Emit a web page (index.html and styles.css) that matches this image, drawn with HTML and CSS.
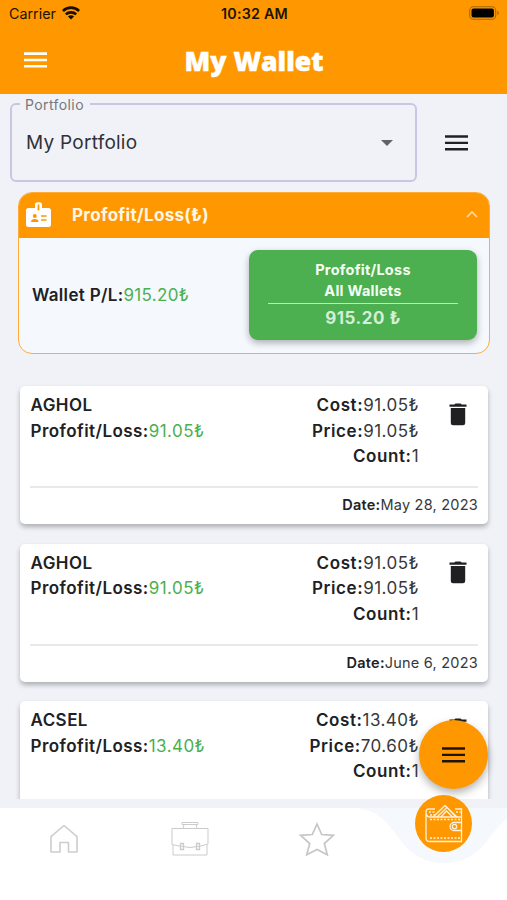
FILE: index.html
```html
<!DOCTYPE html>
<html lang="en">
<head>
<meta charset="utf-8">
<title>My Wallet</title>
<link rel="stylesheet" href="styles.css">
</head>
<body>
<div class="app">
  <header class="top">
    <div class="status">
      <div class="carrier"><span class="carrier-name">Carrier</span>
        <svg width="18" height="14" viewBox="0 0 18 14"><g fill="none" stroke="#171000" stroke-width="2.7"><path d="M.9 5a11.6 11.6 0 0 1 16.2 0"/><path d="M3.8 8.4a7.5 7.5 0 0 1 10.4 0"/></g><path d="M9 13.6 5.9 10.600a4.4 4.4 0 0 1 6.2 0z" fill="#171000"/></svg>
      </div>
      <div class="clock">10:32 AM</div>
      <svg class="battery" width="31" height="14" viewBox="0 0 31 14"><rect x=".7" y=".7" width="26" height="12.6" rx="3.8" fill="none" stroke="#a86500" stroke-width="1.1"/><rect x="2.5" y="2.5" width="22.4" height="9" rx="2" fill="#000"/><path d="M28.3 4.8v4.4q1.5-.7 1.5-2.2t-1.5-2.2z" fill="#a86500"/></svg>
    </div>
    <div class="bar">
      <svg class="menu" width="23" height="16" viewBox="0 0 23 16"><path d="M0 1.6h23M0 8h23M0 14.3h23" stroke="#fff" stroke-width="2.6"/></svg>
      <h1>My Wallet</h1>
    </div>
  </header>
  <main>
    <div class="picker">
      <fieldset><legend>Portfolio</legend>
        <div class="select"><span>My Portfolio</span><svg width="12" height="6" viewBox="0 0 12 6"><path d="M0 0h12L6 6z" fill="#626368"/></svg></div>
      </fieldset>
      <svg class="options" width="23" height="16" viewBox="0 0 23 16"><path d="M0 1.5h23M0 7.9h23M0 14.3h23" stroke="#202124" stroke-width="2.4"/></svg>
    </div>
    <section class="summary">
      <div class="summary-head">
        <svg class="badge" width="25" height="26" viewBox="0 0 25 26"><path fill="#fff" d="M2.5 6h20A2.500 2.500 0 0 1 25 8.500v14a2.500 2.500 0 0 1-2.500 2.500h-20A2.500 2.500 0 0 1 0 22.500v-14A2.500 2.500 0 0 1 2.500 6z"/><rect x="9" y=".3" width="7" height="9.700" rx="2.500" fill="#fff"/><path d="M12.500 2.500v6" stroke="#ff9800" stroke-width="1.800"/><g fill="#ff9800"><circle cx="8.800" cy="14" r="2"/><path d="M5 20q0-3 3.800-3t3.800 3zM15 13.300h5.500v1.400H15zM15 17.300h5.500v1.400H15z"/></g></svg>
        <span class="summary-title">Profofit/Loss(₺)</span>
        <svg class="chev" width="12" height="8" viewBox="0 0 12 8"><path d="m1 7 5-5 5 5" fill="none" stroke="#ffd69a" stroke-width="1.700"/></svg>
      </div>
      <div class="summary-body">
        <div class="own"><b>Wallet P/L:</b><span class="gain">915.20₺</span></div>
        <div class="total"><div class="total-name">Profofit/Loss<br>All Wallets</div><div class="total-value">915.20 ₺</div></div>
      </div>
    </section>
    <div class="list">
      <article class="card">
        <div class="info">
          <div class="left"><b>AGHOL</b><br><b>Profofit/Loss:</b><span class="gain">91.05₺</span></div>
          <div class="right"><b>Cost:</b>91.05₺<br><b>Price:</b>91.05₺<br><b>Count:</b>1</div>
          <svg class="trash" width="18" height="23" viewBox="0 0 18 23"><path d="M.5 1.500h4.800L6.500.5h5l1.200 1h4.800v2.200H.5zM1.800 5h14.400v15q0 2.300-2.300 2.300H4.100q-2.300 0-2.300-2.300z" fill="#202022"/></svg>
        </div>
        <div class="date"><b>Date:</b>May 28, 2023</div>
      </article>
      <article class="card">
        <div class="info">
          <div class="left"><b>AGHOL</b><br><b>Profofit/Loss:</b><span class="gain">91.05₺</span></div>
          <div class="right"><b>Cost:</b>91.05₺<br><b>Price:</b>91.05₺<br><b>Count:</b>1</div>
          <svg class="trash" width="18" height="23" viewBox="0 0 18 23"><path d="M.5 1.500h4.800L6.500.5h5l1.200 1h4.800v2.200H.5zM1.800 5h14.400v15q0 2.300-2.300 2.300H4.100q-2.300 0-2.300-2.300z" fill="#202022"/></svg>
        </div>
        <div class="date"><b>Date:</b>June 6, 2023</div>
      </article>
      <article class="card">
        <div class="info">
          <div class="left"><b>ACSEL</b><br><b>Profofit/Loss:</b><span class="gain">13.40₺</span></div>
          <div class="right"><b>Cost:</b>13.40₺<br><b>Price:</b>70.60₺<br><b>Count:</b>1</div>
          <svg class="trash" width="18" height="23" viewBox="0 0 18 23"><path d="M.5 1.500h4.800L6.500.5h5l1.200 1h4.800v2.200H.5zM1.800 5h14.400v15q0 2.300-2.300 2.300H4.100q-2.300 0-2.300-2.300z" fill="#202022"/></svg>
        </div>
      </article>
    </div>
  </main>
  <nav>
    <svg class="notch" width="227" height="56" viewBox="0 0 227 56"><path d="M75 0C98 2 107 14 121 33c11 14 23 22 43 22s32-8 43-22c7-9 12-16 20-22V0z" fill="#f5f9fd"/></svg>
    <svg class="tab" width="30" height="30" viewBox="0 0 30 30"><path d="M15 1.500 28 12.700V28h-8.500V18.500H11V28H2V12.700z" fill="none" stroke="#cdcdcd" stroke-width="1.600" stroke-linejoin="round"/></svg>
    <svg class="tab" width="38" height="36" viewBox="0 0 38 36"><g fill="none" stroke="#cbcbcb"><path d="M1 7.500h36V23l-7 2-11 1.500L8 25l-7-1.500zM2 24v10h34V24"/><path d="M11 1.500h16v2H11zM13 3.500l-1 4M25 3.500l1 4"/><path d="M9.500 22.500h3v6h-3zM25.500 22.500h3v6h-3z" stroke-width="1.300"/></g></svg>
    <svg class="tab" width="36" height="34" viewBox="0 0 36 34"><path d="m18 2 4.700 10.500 11.600.8-9 8.200 3 11.300L18 27.500 7.700 32.800l3-11.300-9-8.200 11.600-.8z" fill="none" stroke="#c6c6c6" stroke-width="1.700"/></svg>
    <span class="tab-space"></span>
  </nav>
  <button class="fab"><svg width="23" height="16" viewBox="0 0 23 16"><path d="M0 1.500h23M0 7.900h23M0 14.300h23" stroke="#1d1300" stroke-width="2.400"/></svg></button>
  <button class="wallet"><svg width="38" height="38" viewBox="0 0 38 38"><g fill="none" stroke="#fff1dc" stroke-width="1.300"><path d="M10 4H3.500q-2.500 0-2.500 3v26q0 3.500 3.500 3.500h32v-11M36.500 17.500V4H30M1 7q0 5 4 5h31.500"/><path d="m8 12 12-11.500L32 12M12 12 22 2.500 31 12M16 12l5.500-6 6 6"/><path d="M36.500 17.500H29a4 4 0 0 0 0 8h7.500z"/><circle cx="29.500" cy="21.500" r="2.200"/><path d="M5 14.500h31M5 33h31M4 7h6M31 7h5M5 10h5" stroke-dasharray="2 1.500" stroke-width="1.600"/></g></svg></button>
</div>
</body>
</html>
```
FILE: styles.css
```css
* { box-sizing: border-box; }
body { margin: 0; background: #f1f2f8; }
.app { position: relative; width: 507px; height: 900px; overflow: hidden; display: flex; flex-direction: column; font-family: Inter, "Noto Sans", sans-serif; color: #202124; }
svg { display: block; flex: none; }
b { font-weight: 600; }
button { border: 0; padding: 0; display: flex; align-items: center; justify-content: center; border-radius: 50%; background: #ff9800; }
.top { height: 94px; flex: none; background: #ff9800; }
.status { height: 26px; display: grid; grid-template-columns: 1fr auto 1fr; align-items: center; padding: 0 7px 0 9px; color: #1d1300; font-size: 14.300px; }
.carrier { display: flex; gap: 6px; align-items: center; }
.carrier-name { letter-spacing: 0; }
.clock { font-weight: 600; letter-spacing: .2px; }
.battery { justify-self: end; }
.bar { height: 68px; display: grid; grid-template-columns: 1fr auto 1fr; align-items: center; padding: 0 23px 0 24px; }
h1 { margin: 2px 0 0; font: 800 26.600px/36px "Open Sans", sans-serif; color: #fff; letter-spacing: 0; -webkit-text-stroke: .5px #fff; }
main { height: 705px; flex: none; overflow: hidden; }
.picker { display: flex; align-items: center; height: 98px; padding-left: 10px; gap: 28px; }
fieldset { width: 407px; height: 86px; margin: -9px 0 0; padding: 0 22px 0 14px; border: 2px solid #c9c6e3; border-radius: 6px; min-width: 0; }
legend { font-size: 14px; line-height: 17px; color: #77777c; letter-spacing: .4px; padding: 0 6px 0 5px; margin-left: -6px; }
.select { display: flex; justify-content: space-between; align-items: center; height: 60px; font-size: 19px; letter-spacing: .25px; color: #303136; }
.summary { width: 472px; height: 162px; margin-left: 18px; border: 1.500px solid #ffab36; border-radius: 14px; overflow: hidden; background: #f5f9fd; }
.summary-head { height: 45px; background: #ff9800; display: flex; align-items: center; padding: 0 11px 0 7px; color: #fff6e7; }
.badge { margin-top: -2px; }
.summary-title { flex: 1; padding-left: 21px; margin-top: -2px; font-size: 17px; font-weight: 700; letter-spacing: .32px; }
.chev { margin-top: -3px; }
.summary-body { display: flex; justify-content: space-between; align-items: center; height: 114px; padding: 0 12px 0 13px; }
.own { font-size: 17px; letter-spacing: .33px; }
.gain { color: #4caf50; }
.total { width: 228px; height: 90px; border-radius: 9px; background: #4caf50; box-shadow: 0 3px 7px rgba(0,0,0,.3); padding: 10px 19px 0; color: #f4fff4; text-align: center; }
.total-name { font-size: 14.500px; font-weight: 700; line-height: 20.500px; letter-spacing: .25px; padding-bottom: 2px; border-bottom: 1.500px solid #c2e5c3; }
.total-value { font-size: 17px; font-weight: 700; line-height: 28px; letter-spacing: .5px; color: #d5eed6; }
.list { padding: 32px 19px 0 20px; display: flex; flex-direction: column; gap: 19.500px; }
.card { height: 138px; flex: none; background: #fff; border-radius: 5px; box-shadow: 0 3px 5px rgba(0,0,0,.28); padding: 7px 10px 0; }
.info { display: flex; height: 95px; border-bottom: 2px solid #e9e9eb; font-size: 17px; line-height: 25.700px; letter-spacing: .45px; }
.left { padding-left: .5px; }
.right { margin-left: auto; text-align: right; color: #37373a; }
.right b { color: #202124; letter-spacing: .6px; }
.trash { margin: 10px 11px 0 30px; }
.date { text-align: right; font-size: 14.500px; line-height: 34px; letter-spacing: .23px; color: #37373a; }
.date b { color: #202124; }
nav { position: relative; height: 92px; margin-top: 9px; background: #fff; display: grid; grid-template-columns: repeat(4, 1fr); justify-items: center; align-items: start; padding-top: 14px; }
.notch { position: absolute; right: 0; top: 0; }
.tab { position: relative; }
.tab:nth-of-type(2) { margin: 2px 0 0 2px; }
.tab:nth-of-type(3) { margin-top: -1px; }
.fab { position: absolute; left: 419px; top: 720px; width: 69px; height: 69px; box-shadow: 0 4px 8px rgba(0,0,0,.3); }
.wallet { position: absolute; left: 415px; top: 795px; width: 57px; height: 57px; }
```
